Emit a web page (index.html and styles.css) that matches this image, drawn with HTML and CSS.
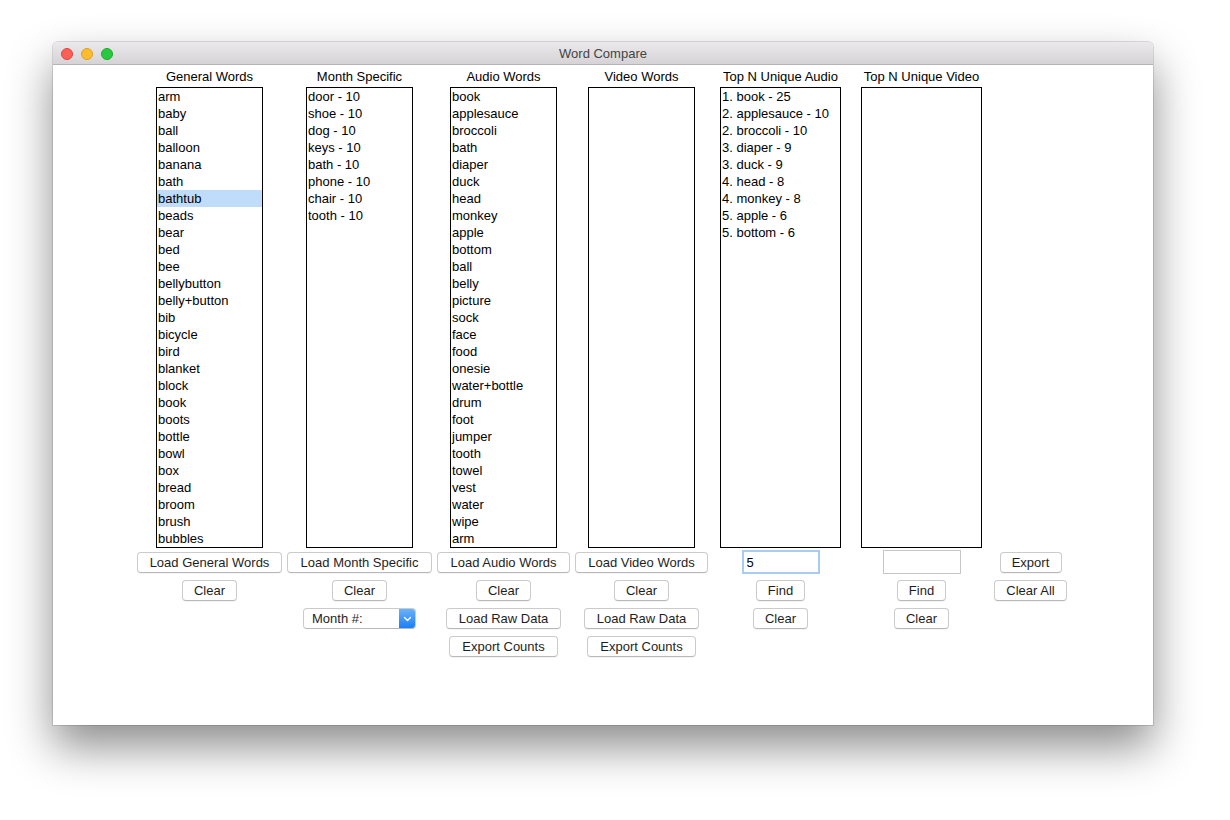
FILE: index.html
```html
<!DOCTYPE html>
<html>
<head>
<meta charset="utf-8">
<title>Word Compare</title>
<link rel="stylesheet" href="styles.css">
</head>
<body>
<div class="desk">
  <div class="window">
    <div class="titlebar">
      <div class="lights">
        <span class="light red"></span>
        <span class="light yellow"></span>
        <span class="light green"></span>
      </div>
      <div class="title">Word Compare</div>
    </div>
    <div class="content">
      <div class="col c1">
        <div class="label">General Words</div>
        <div class="list">
          <div class="item">arm</div><div class="item">baby</div><div class="item">ball</div><div class="item">balloon</div><div class="item">banana</div><div class="item">bath</div><div class="item selected">bathtub</div><div class="item">beads</div><div class="item">bear</div><div class="item">bed</div><div class="item">bee</div><div class="item">bellybutton</div><div class="item">belly+button</div><div class="item">bib</div><div class="item">bicycle</div><div class="item">bird</div><div class="item">blanket</div><div class="item">block</div><div class="item">book</div><div class="item">boots</div><div class="item">bottle</div><div class="item">bowl</div><div class="item">box</div><div class="item">bread</div><div class="item">broom</div><div class="item">brush</div><div class="item">bubbles</div>
        </div>
        <button class="btn w145">Load General Words</button>
        <button class="btn w55">Clear</button>
      </div>
      <div class="col c2">
        <div class="label">Month Specific</div>
        <div class="list">
          <div class="item">door - 10</div><div class="item">shoe - 10</div><div class="item">dog - 10</div><div class="item">keys - 10</div><div class="item">bath - 10</div><div class="item">phone - 10</div><div class="item">chair - 10</div><div class="item">tooth - 10</div>
        </div>
        <button class="btn w145">Load Month Specific</button>
        <button class="btn w55">Clear</button>
        <div class="select">
          <span class="select-text">Month #:</span>
          <span class="select-arrow"><svg width="9" height="6" viewBox="0 0 9 6"><path d="M1.5 1.5 L4.5 4.5 L7.5 1.5" fill="none" stroke="#fff" stroke-width="1.4" stroke-linecap="round" stroke-linejoin="round"/></svg></span>
        </div>
      </div>
      <div class="col c3">
        <div class="label">Audio Words</div>
        <div class="list">
          <div class="item">book</div><div class="item">applesauce</div><div class="item">broccoli</div><div class="item">bath</div><div class="item">diaper</div><div class="item">duck</div><div class="item">head</div><div class="item">monkey</div><div class="item">apple</div><div class="item">bottom</div><div class="item">ball</div><div class="item">belly</div><div class="item">picture</div><div class="item">sock</div><div class="item">face</div><div class="item">food</div><div class="item">onesie</div><div class="item">water+bottle</div><div class="item">drum</div><div class="item">foot</div><div class="item">jumper</div><div class="item">tooth</div><div class="item">towel</div><div class="item">vest</div><div class="item">water</div><div class="item">wipe</div><div class="item">arm</div>
        </div>
        <button class="btn w133">Load Audio Words</button>
        <button class="btn w55">Clear</button>
        <button class="btn w115">Load Raw Data</button>
        <button class="btn w109">Export Counts</button>
      </div>
      <div class="col c4">
        <div class="label">Video Words</div>
        <div class="list"></div>
        <button class="btn w133">Load Video Words</button>
        <button class="btn w55">Clear</button>
        <button class="btn w115">Load Raw Data</button>
        <button class="btn w109">Export Counts</button>
      </div>
      <div class="col c5">
        <div class="label">Top N Unique Audio</div>
        <div class="list wide">
          <div class="item">1. book - 25</div><div class="item">2. applesauce - 10</div><div class="item">2. broccoli - 10</div><div class="item">3. diaper - 9</div><div class="item">3. duck - 9</div><div class="item">4. head - 8</div><div class="item">4. monkey - 8</div><div class="item">5. apple - 6</div><div class="item">5. bottom - 6</div>
        </div>
        <input class="field focused" type="text" value="5">
        <button class="btn w49">Find</button>
        <button class="btn w55">Clear</button>
      </div>
      <div class="col c6">
        <div class="label">Top N Unique Video</div>
        <div class="list wide"></div>
        <input class="field" type="text" value="">
        <button class="btn w49">Find</button>
        <button class="btn w55">Clear</button>
      </div>
      <div class="col c7">
        <div class="label"></div>
        <div class="spacer"></div>
        <button class="btn w62">Export</button>
        <button class="btn w73">Clear All</button>
      </div>
    </div>
  </div>
</div>
</body>
</html>
```

FILE: styles.css
```css
html, body {
  margin: 0;
  padding: 0;
  background: #ffffff;
}
body {
  font-family: "Liberation Sans", Arial, sans-serif;
  font-size: 13px;
  color: #000;
}
.desk {
  padding: 42px 0 0 53px;
  width: 1230px;
  height: 820px;
  box-sizing: border-box;
  overflow: hidden;
}
.window {
  width: 1100px;
  height: 683px;
  background: #fff;
  border-radius: 5px 5px 0 0;
  box-shadow: 0 22px 45px rgba(0, 0, 0, 0.45), 0 0 0 1px rgba(0, 0, 0, 0.12);
  overflow: hidden;
}
.titlebar {
  height: 22px;
  border-bottom: 1px solid #b4b4b4;
  background: linear-gradient(#ebe9eb, #d5d3d5);
  display: flex;
  align-items: center;
  position: relative;
}
.lights {
  display: flex;
  gap: 8px;
  padding-left: 8px;
  margin-top: 2px;
}
.light {
  width: 12px;
  height: 12px;
  border-radius: 50%;
  box-sizing: border-box;
}
.red { background: #fc5f57; border: 1px solid #e0443e; }
.yellow { background: #fdbc2e; border: 1px solid #dea123; }
.green { background: #28c940; border: 1px solid #1aab29; }
.title {
  position: absolute;
  left: 0;
  right: 0;
  top: 1px;
  line-height: 22px;
  text-align: center;
  color: #444;
  font-size: 13px;
  pointer-events: none;
}
.content {
  display: flex;
  padding: 3px 0 0 84px;
}
.col {
  display: grid;
  grid-template-rows: 19px 465px 28px 28px 28px 21px;
  justify-items: center;
  align-items: start;
}
.c1 { width: 145px; }
.c2 { width: 145px; margin-left: 5px; }
.c3 { width: 133px; margin-left: 5px; }
.c4 { width: 133px; margin-left: 5px; }
.c5 { width: 121px; margin-left: 12px; }
.c6 { width: 121px; margin-left: 20px; }
.c7 { width: 73px; margin-left: 12px; }
.label {
  line-height: 17px;
  height: 17px;
  white-space: nowrap;
}
.list {
  width: 107px;
  height: 461px;
  border: 1px solid #000;
  box-sizing: border-box;
  overflow: hidden;
}
.list.wide { width: 121px; }
.item {
  height: 17px;
  line-height: 17px;
  padding-left: 1px;
  white-space: nowrap;
}
.item.selected {
  background: #bfdcfa;
}
.btn {
  height: 21px;
  box-sizing: border-box;
  padding: 0;
  background: #fff;
  border: 1px solid #cbcbcb;
  border-bottom-color: #b8b8b8;
  border-radius: 4px;
  box-shadow: 0 1px 0 rgba(0, 0, 0, 0.04);
  font-family: "Liberation Sans", Arial, sans-serif;
  font-size: 13px;
  color: #1e1e1e;
  line-height: 19px;
  text-align: center;
  white-space: nowrap;
}
.w145 { width: 145px; }
.w133 { width: 133px; }
.w115 { width: 115px; }
.w109 { width: 109px; }
.w73 { width: 73px; }
.w62 { width: 62px; }
.w55 { width: 55px; }
.w49 { width: 49px; }
.field {
  width: 78px;
  height: 24px;
  margin-top: -2px;
  box-sizing: border-box;
  border: 1px solid #c6c6c6;
  padding: 0 0 0 4px;
  font-family: "Liberation Sans", Arial, sans-serif;
  font-size: 13px;
  color: #000;
  outline: none;
  background: #fff;
}
.field.focused {
  border: 2px solid #a9cdf1;
  padding-left: 3px;
}
.select {
  width: 113px;
  height: 21px;
  box-sizing: border-box;
  border: 1px solid #cbcbcb;
  border-bottom-color: #b8b8b8;
  border-radius: 4px;
  display: flex;
  overflow: hidden;
  background: #fff;
}
.select-text {
  flex: 1;
  padding-left: 8px;
  line-height: 19px;
  color: #1e1e1e;
}
.select-arrow {
  width: 16px;
  background: linear-gradient(#6ab2fb, #1a7ff7);
  display: flex;
  align-items: center;
  justify-content: center;
}
.spacer { height: 1px; }
```
